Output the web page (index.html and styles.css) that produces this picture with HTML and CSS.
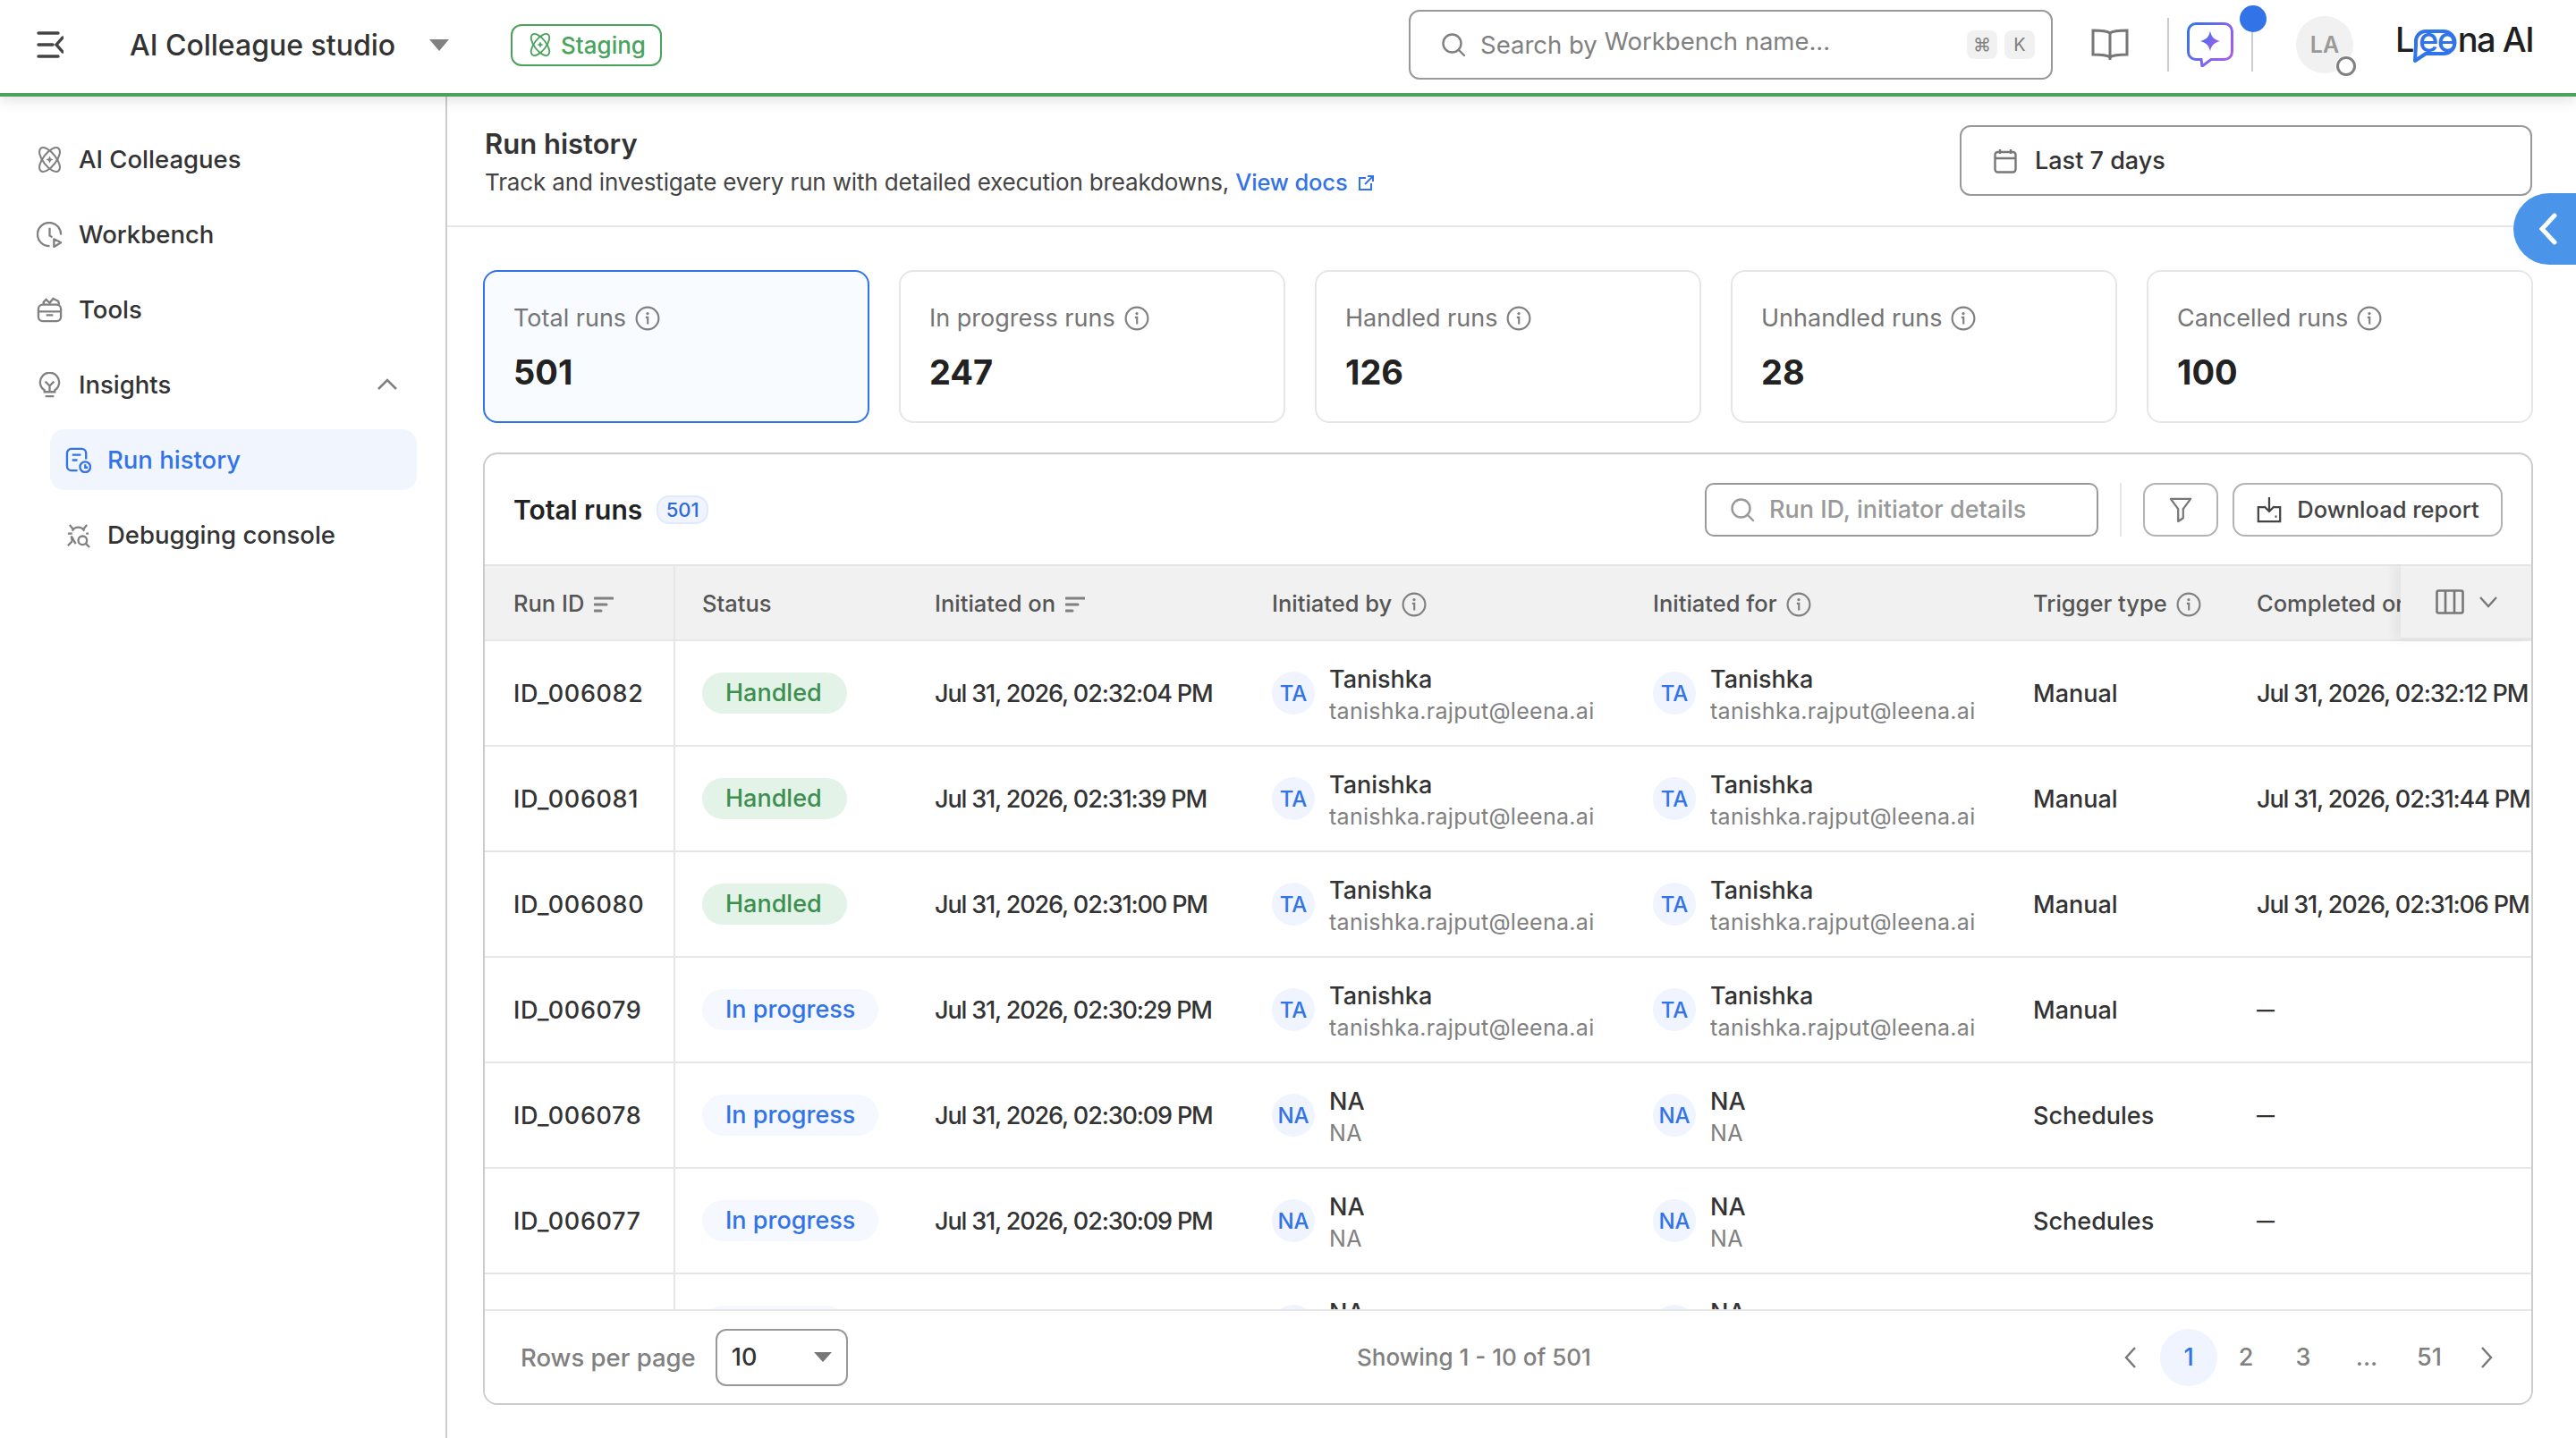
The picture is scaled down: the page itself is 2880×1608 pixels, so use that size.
FILE: index.html
```html
<!DOCTYPE html>
<html lang="en">
<head>
  <meta charset="UTF-8">
  <title>Run history</title>
  <link rel="stylesheet" href="styles.css">
</head>
<body>
  <svg class="sprites" width="0" height="0">
    <defs>
      <linearGradient id="ai-grad" x1="0" y1="0" x2="1" y2="0.6">
        <stop offset="0" stop-color="#2f74e8"/>
        <stop offset="1" stop-color="#a45cf0"/>
      </linearGradient>
      <symbol id="i-atom" viewBox="0 0 28 28">
        <g fill="none" stroke="currentColor" stroke-width="2">
          <ellipse cx="14" cy="14" rx="7" ry="15.5" transform="rotate(-38 14 14)"/>
          <ellipse cx="14" cy="14" rx="7" ry="15.5" transform="rotate(38 14 14)"/>
        </g>
        <path d="M14 10l1.2 2.8L18 14l-2.8 1.2L14 18l-1.2-2.8L10 14l2.8-1.2z" fill="currentColor"/>
      </symbol>
      <symbol id="i-info" viewBox="0 0 26 26">
        <circle cx="13" cy="13" r="11.5" fill="none" stroke="currentColor" stroke-width="2"/>
        <circle cx="13" cy="8" r="1.5" fill="currentColor"/>
        <path d="M11 12h2.2v7" fill="none" stroke="currentColor" stroke-width="2"/>
      </symbol>
      <symbol id="i-sort" viewBox="0 0 22 20">
        <path d="M1 3h20M1 10h13M1 17h7" fill="none" stroke="currentColor" stroke-width="3" stroke-linecap="round"/>
      </symbol>
      <symbol id="i-search" viewBox="0 0 28 28">
        <circle cx="12.5" cy="12.5" r="10" fill="none" stroke="currentColor" stroke-width="2.4"/>
        <path d="M20 20l6 6" fill="none" stroke="currentColor" stroke-width="2.4" stroke-linecap="round"/>
      </symbol>
    </defs>
  </svg>

  <header class="topbar">
    <svg class="menu-icon" viewBox="0 0 30 30" fill="none" stroke="#444" stroke-width="3.4" stroke-linecap="round">
      <path d="M2 2h22M2 15h16M2 28h22M29 7l-7 8 7 8"/>
    </svg>
    <span class="studio">AI Colleague studio</span>
    <span class="caret"></span>
    <span class="env">
      <svg class="env-icon"><use href="#i-atom"/></svg>
      Staging
    </span>

    <div class="global-search">
      <svg class="search-icon"><use href="#i-search"/></svg>
      <span>Search by</span>
      <span class="search-word">Workbench name...</span>
      <span class="keys"><kbd>⌘</kbd><kbd>K</kbd></span>
    </div>

    <svg class="book-icon" viewBox="0 0 42 36" fill="none" stroke="#777" stroke-width="3">
      <path d="M21 5C17 2 8 2 2 2v27c6 0 15 0 19 3 4-3 13-3 19-3V2c-6 0-15 0-19 3zM21 5v30"/>
    </svg>

    <div class="assistant">
      <svg class="ai-icon" viewBox="0 0 52 50" fill="none">
        <path d="M10 1.5h32a8.5 8.5 0 0 1 8.5 8.5v23a8.5 8.5 0 0 1-8.5 8.5H27l-10 7.5-1-7.5h-6A8.5 8.5 0 0 1 1.5 33V10A8.5 8.5 0 0 1 10 1.5z" stroke="url(#ai-grad)" stroke-width="3"/>
        <path d="M26 9.5c1.5 7 4 9.5 11 11.5-7 2-9.5 4.5-11 11.5-1.5-7-4-9.5-11-11.5 7-2 9.5-4.5 11-11.5z" fill="url(#ai-grad)"/>
      </svg>
      <span class="dot"></span>
    </div>

    <div class="avatar">
      LA
      <span class="status"></span>
    </div>

    <div class="logo">
      <svg class="logo-bubble" viewBox="0 0 50 38" fill="none">
        <path d="M14 2h21a12.5 12.5 0 0 1 0 25H15L3 35l1-17V13A11 11 0 0 1 14 2z" stroke="#2f74e8" stroke-width="4" stroke-linejoin="round"/>
      </svg>
      <span>L</span><span class="logo-ee">ee</span><span>na AI</span>
    </div>
  </header>

  <div class="shell">
    <nav class="sidebar">
      <a class="nav-item">
        <svg class="nav-icon"><use href="#i-atom"/></svg>
        AI Colleagues
      </a>
      <a class="nav-item">
        <svg class="nav-icon" viewBox="0 0 30 30" fill="none" stroke="currentColor" stroke-width="2.4">
          <path d="M15 28A13.5 13.5 0 1 1 28 15M15 7v9l3 2"/>
          <path d="M20 20l8 4-8 5z" stroke-linejoin="round"/>
        </svg>
        Workbench
      </a>
      <a class="nav-item">
        <svg class="nav-icon" viewBox="0 0 30 30" fill="none" stroke="currentColor" stroke-width="2.4">
          <rect x="2" y="9" width="26" height="19" rx="5"/>
          <path d="M2 17h26M11 21h8M8 9V6l3-3 4 4 4-5 6 3 1 4"/>
        </svg>
        Tools
      </a>
      <a class="nav-item">
        <svg class="nav-icon" viewBox="0 0 30 30" fill="none" stroke="currentColor" stroke-width="2.4">
          <path d="M9 21a11 11 0 1 1 12 0v2H9zM10 28h10M10 11l5 5 5-5M15 16v6"/>
        </svg>
        Insights
        <svg class="nav-chevron" viewBox="0 0 24 14" fill="none" stroke="currentColor" stroke-width="2.6">
          <path d="M2 12L12 2l10 10"/>
        </svg>
      </a>
      <a class="nav-item sub active">
        <svg class="nav-icon" viewBox="0 0 30 30" fill="none" stroke="currentColor" stroke-width="2.4">
          <path d="M14 27H7a5 5 0 0 1-5-5V7a5 5 0 0 1 5-5h12a5 5 0 0 1 5 5v7M8 9h10M8 15h6"/>
          <circle cx="23" cy="23" r="6"/>
          <path d="M23 20v3.5h3"/>
        </svg>
        Run history
      </a>
      <a class="nav-item sub">
        <svg class="nav-icon" viewBox="0 0 30 30" fill="none" stroke="currentColor" stroke-width="2.4">
          <path d="M8 10a8 8 0 0 1 14 0M5 3l4 5M25 3l-4 5M3 13h5M27 13h-3M3 27l5-5M8 22l-1-6 5 9"/>
          <circle cx="20" cy="21" r="5"/>
          <path d="M24 25l4 4"/>
        </svg>
        Debugging console
      </a>
    </nav>

    <main class="content">
      <section class="page-head">
        <div>
          <h1>Run history</h1>
          <p>
            Track and investigate every run with detailed execution breakdowns,
            <a class="docs">View docs<svg class="ext-icon" viewBox="0 0 20 20" fill="none" stroke="currentColor" stroke-width="2"><path d="M10 4H3v13h13v-7M9 11l9-9M12 2h6v6"/></svg></a>
          </p>
        </div>
        <div class="date-filter">
          <svg class="cal-icon" viewBox="0 0 26 28" fill="none" stroke="#777" stroke-width="2.4">
            <rect x="1.5" y="4" width="23" height="22.5" rx="3"/>
            <path d="M1.5 11h23M7 1v5M19 1v5"/>
          </svg>
          Last 7 days
        </div>
      </section>

      <button class="collapse-tab">
        <svg viewBox="0 0 22 36" fill="none" stroke="#fff" stroke-width="5" stroke-linecap="round">
          <path d="M18 3L4 18l14 15"/>
        </svg>
      </button>

      <section class="body-wrap">
        <div class="cards">
          <div class="card selected">
            <div class="card-label">Total runs <svg class="info"><use href="#i-info"/></svg></div>
            <div class="card-value">501</div>
          </div>
          <div class="card">
            <div class="card-label">In progress runs <svg class="info"><use href="#i-info"/></svg></div>
            <div class="card-value">247</div>
          </div>
          <div class="card">
            <div class="card-label">Handled runs <svg class="info"><use href="#i-info"/></svg></div>
            <div class="card-value">126</div>
          </div>
          <div class="card">
            <div class="card-label">Unhandled runs <svg class="info"><use href="#i-info"/></svg></div>
            <div class="card-value">28</div>
          </div>
          <div class="card">
            <div class="card-label">Cancelled runs <svg class="info"><use href="#i-info"/></svg></div>
            <div class="card-value">100</div>
          </div>
        </div>

        <div class="panel">
          <div class="panel-head">
            <h2>Total runs</h2>
            <span class="count">501</span>
            <div class="table-search">
              <svg class="search-icon"><use href="#i-search"/></svg>
              Run ID, initiator details
            </div>
            <span class="tool-sep"></span>
            <button class="tool-btn filter">
              <svg viewBox="0 0 28 32" fill="none" stroke="#777" stroke-width="2.4" stroke-linejoin="round">
                <path d="M2 3h24l-9 12v11l-6 4V15z"/>
              </svg>
            </button>
            <button class="tool-btn download">
              <svg viewBox="0 0 30 32" fill="none" stroke="#444" stroke-width="2.4">
                <path d="M15 1v17M9 12l6 6 6-6M9 13H2v17h26V13h-7M22 24h2"/>
              </svg>
              Download report
            </button>
          </div>

          <div class="table-wrap">
            <table class="runs">
              <colgroup>
                <col class="c-id"><col class="c-status"><col class="c-on"><col class="c-by"><col class="c-for"><col class="c-trigger"><col class="c-done">
              </colgroup>
              <thead>
                <tr>
                  <th class="id-cell">Run ID <svg class="sort"><use href="#i-sort"/></svg></th>
                  <th>Status</th>
                  <th>Initiated on <svg class="sort"><use href="#i-sort"/></svg></th>
                  <th>Initiated by <svg class="info"><use href="#i-info"/></svg></th>
                  <th>Initiated for <svg class="info"><use href="#i-info"/></svg></th>
                  <th>Trigger type <svg class="info"><use href="#i-info"/></svg></th>
                  <th>Completed on</th>
                </tr>
              </thead>
              <tbody>
                <tr>
                  <td class="id-cell">ID_006082</td>
                  <td><span class="pill handled">Handled</span></td>
                  <td>Jul 31, 2026, 02:32:04 PM</td>
                  <td><div class="person"><span class="initials">TA</span><div><div class="p-name">Tanishka</div><div class="p-mail">tanishka.rajput@leena.ai</div></div></div></td>
                  <td><div class="person"><span class="initials">TA</span><div><div class="p-name">Tanishka</div><div class="p-mail">tanishka.rajput@leena.ai</div></div></div></td>
                  <td>Manual</td>
                  <td>Jul 31, 2026, 02:32:12 PM</td>
                </tr>
                <tr>
                  <td class="id-cell">ID_006081</td>
                  <td><span class="pill handled">Handled</span></td>
                  <td>Jul 31, 2026, 02:31:39 PM</td>
                  <td><div class="person"><span class="initials">TA</span><div><div class="p-name">Tanishka</div><div class="p-mail">tanishka.rajput@leena.ai</div></div></div></td>
                  <td><div class="person"><span class="initials">TA</span><div><div class="p-name">Tanishka</div><div class="p-mail">tanishka.rajput@leena.ai</div></div></div></td>
                  <td>Manual</td>
                  <td>Jul 31, 2026, 02:31:44 PM</td>
                </tr>
                <tr>
                  <td class="id-cell">ID_006080</td>
                  <td><span class="pill handled">Handled</span></td>
                  <td>Jul 31, 2026, 02:31:00 PM</td>
                  <td><div class="person"><span class="initials">TA</span><div><div class="p-name">Tanishka</div><div class="p-mail">tanishka.rajput@leena.ai</div></div></div></td>
                  <td><div class="person"><span class="initials">TA</span><div><div class="p-name">Tanishka</div><div class="p-mail">tanishka.rajput@leena.ai</div></div></div></td>
                  <td>Manual</td>
                  <td>Jul 31, 2026, 02:31:06 PM</td>
                </tr>
                <tr>
                  <td class="id-cell">ID_006079</td>
                  <td><span class="pill progress">In progress</span></td>
                  <td>Jul 31, 2026, 02:30:29 PM</td>
                  <td><div class="person"><span class="initials">TA</span><div><div class="p-name">Tanishka</div><div class="p-mail">tanishka.rajput@leena.ai</div></div></div></td>
                  <td><div class="person"><span class="initials">TA</span><div><div class="p-name">Tanishka</div><div class="p-mail">tanishka.rajput@leena.ai</div></div></div></td>
                  <td>Manual</td>
                  <td class="dash">—</td>
                </tr>
                <tr>
                  <td class="id-cell">ID_006078</td>
                  <td><span class="pill progress">In progress</span></td>
                  <td>Jul 31, 2026, 02:30:09 PM</td>
                  <td><div class="person"><span class="initials">NA</span><div><div class="p-name">NA</div><div class="p-mail">NA</div></div></div></td>
                  <td><div class="person"><span class="initials">NA</span><div><div class="p-name">NA</div><div class="p-mail">NA</div></div></div></td>
                  <td>Schedules</td>
                  <td class="dash">—</td>
                </tr>
                <tr>
                  <td class="id-cell">ID_006077</td>
                  <td><span class="pill progress">In progress</span></td>
                  <td>Jul 31, 2026, 02:30:09 PM</td>
                  <td><div class="person"><span class="initials">NA</span><div><div class="p-name">NA</div><div class="p-mail">NA</div></div></div></td>
                  <td><div class="person"><span class="initials">NA</span><div><div class="p-name">NA</div><div class="p-mail">NA</div></div></div></td>
                  <td>Schedules</td>
                  <td class="dash">—</td>
                </tr>
                <tr>
                  <td class="id-cell"></td>
                  <td><span class="pill progress"></span></td>
                  <td></td>
                  <td><div class="person"><span class="initials">NA</span><div><div class="p-name">NA</div><div class="p-mail">NA</div></div></div></td>
                  <td><div class="person"><span class="initials">NA</span><div><div class="p-name">NA</div><div class="p-mail">NA</div></div></div></td>
                  <td></td>
                  <td></td>
                </tr>
              </tbody>
            </table>
            <div class="col-picker">
              <svg class="col-icon" viewBox="0 0 32 28" fill="none" stroke="#777" stroke-width="2.6">
                <rect x="1.5" y="1.5" width="29" height="25" rx="2"/>
                <path d="M11 1.5v25M21 1.5v25"/>
              </svg>
              <svg class="col-chevron" viewBox="0 0 22 14" fill="none" stroke="#777" stroke-width="2.4">
                <path d="M2 2l9 10 9-10"/>
              </svg>
            </div>
          </div>

          <div class="panel-foot">
            <span class="rows-label">Rows per page</span>
            <div class="rows-select">10<span class="select-caret"></span></div>
            <span class="showing">Showing 1 - 10 of 501</span>
            <div class="pager">
              <svg class="page-arrow" viewBox="0 0 14 26" fill="none" stroke="#777" stroke-width="2.4"><path d="M12 2L2 13l10 11"/></svg>
              <span class="page current">1</span>
              <span class="page">2</span>
              <span class="page">3</span>
              <span class="page ellipsis">...</span>
              <span class="page last">51</span>
              <svg class="page-arrow" viewBox="0 0 14 26" fill="none" stroke="#777" stroke-width="2.4"><path d="M2 2l10 11L2 24"/></svg>
            </div>
          </div>
        </div>
      </section>
    </main>
  </div>
</body>
</html>
```
FILE: styles.css
```css
* {
  box-sizing: border-box;
}
body {
  margin: 0;
  height: 1608px;
  overflow: hidden;
  background: #fff;
  color: #333;
  font-family: Inter, "Noto Sans", sans-serif;
  font-size: 27px;
  display: flex;
  flex-direction: column;
}
.sprites {
  position: absolute;
}

/* top bar */
.topbar {
  height: 108px;
  flex: none;
  display: flex;
  align-items: center;
  padding: 0 48px 4px 41px;
  border-bottom: 4px solid #4aa35c;
  box-shadow: 0 4px 14px rgba(0,0,0,0.12);
  position: relative;
  z-index: 2;
  background: #fff;
}
.menu-icon {
  width: 30px;
  height: 30px;
}
.studio {
  margin-left: 74px;
  width: 335px;
  font-size: 32px;
  font-weight: 500;
}
.caret {
  width: 0;
  height: 0;
  border-left: 11px solid transparent;
  border-right: 11px solid transparent;
  border-top: 13px solid #808080;
}
.env {
  margin-left: 69px;
  width: 169px;
  height: 47px;
  border: 2px solid #4aa35c;
  border-radius: 12px;
  color: #4aa35c;
  font-size: 26px;
  font-weight: 500;
  display: flex;
  align-items: center;
  gap: 10px;
  padding-left: 18px;
}
.env-icon {
  width: 26px;
  height: 26px;
}
.global-search {
  margin-left: 835px;
  width: 720px;
  height: 78px;
  border: 2px solid #999;
  border-radius: 12px;
  display: flex;
  align-items: center;
  padding: 0 18px 0 34px;
  color: #808080;
  font-size: 27.5px;
  gap: 8px;
}
.global-search .search-icon {
  margin-right: 8px;
}
.search-icon {
  width: 28px;
  height: 28px;
  flex: none;
}
.search-word {
  transform: translateY(-4px);
}
.keys {
  margin-left: auto;
  display: flex;
  gap: 8px;
}
kbd {
  width: 34px;
  height: 32px;
  background: #f1f1f1;
  border-radius: 8px;
  font-family: inherit;
  font-size: 20px;
  display: flex;
  align-items: center;
  justify-content: center;
  color: #808080;
}
.book-icon {
  margin-left: 43px;
  width: 42px;
  height: 36px;
}
.assistant {
  margin-left: 43px;
  width: 96px;
  height: 60px;
  border-left: 2px solid #ccc;
  border-right: 2px solid #ccc;
  position: relative;
  display: flex;
  align-items: center;
  padding-left: 20px;
}
.ai-icon {
  width: 52px;
  height: 50px;
}
.dot {
  position: absolute;
  right: -17px;
  top: -14px;
  width: 30px;
  height: 30px;
  border-radius: 50%;
  background: #3273e8;
}
.avatar {
  margin-left: 48px;
  width: 64px;
  height: 64px;
  border-radius: 50%;
  background: #f1f1f1;
  color: #999;
  font-size: 25px;
  font-weight: 600;
  display: flex;
  align-items: center;
  justify-content: center;
  position: relative;
}
.status {
  position: absolute;
  right: -4px;
  bottom: -4px;
  width: 24px;
  height: 24px;
  border-radius: 50%;
  background: #fff;
  display: flex;
  align-items: center;
  justify-content: center;
}
.status::after {
  content: "";
  width: 16px;
  height: 16px;
  border-radius: 50%;
  border: 3px solid #808080;
}
.logo {
  margin-left: auto;
  position: relative;
  color: #1f1f1f;
  font-size: 38px;
  letter-spacing: -1.5px;
  font-weight: 500;
  line-height: 1;
  display: flex;
  margin-top: -12px;
}
.logo-ee {
  color: #2f74e8;
  margin: 0 2px 0 6px;
}
.logo-bubble {
  position: absolute;
  left: 19px;
  top: 8px;
  width: 50px;
  height: 38px;
}

/* shell */
.shell {
  flex: 1;
  display: flex;
  min-height: 0;
}
.sidebar {
  width: 500px;
  flex: none;
  border-right: 2px solid #ccc;
  padding: 36px 32px 0 41px;
  display: flex;
  flex-direction: column;
  gap: 16px;
}
.nav-item {
  height: 68px;
  display: flex;
  align-items: center;
  gap: 18px;
  font-size: 27.5px;
  font-weight: 500;
  color: #333;
}
.nav-icon {
  width: 29px;
  height: 29px;
  color: #808080;
  flex: none;
}
.nav-chevron {
  margin-left: auto;
  margin-right: 21px;
  width: 24px;
  height: 14px;
  color: #808080;
}
.nav-item.sub {
  margin-left: 15px;
  padding-left: 17px;
  border-radius: 16px;
}
.nav-item.active {
  background: #f0f5fe;
  color: #3273e8;
}
.nav-item.active .nav-icon {
  color: #3273e8;
}

/* main */
.content {
  flex: 1;
  min-width: 0;
  position: relative;
  display: flex;
  flex-direction: column;
}
.page-head {
  height: 146px;
  flex: none;
  border-bottom: 2px solid #e6e6e6;
  display: flex;
  justify-content: space-between;
  padding: 32px 49px 0 42px;
}
h1 {
  margin: 0;
  font-size: 31px;
  font-weight: 600;
  line-height: 42px;
}
.page-head p {
  margin: 3px 0 0;
  font-size: 26px;
  letter-spacing: -0.15px;
  line-height: 38px;
  color: #444;
}
.docs {
  color: #3273e8;
  font-weight: 500;
  font-size: 25.5px;
}
.ext-icon {
  width: 20px;
  height: 20px;
  margin-left: 10px;
  vertical-align: -2px;
}
.date-filter {
  width: 640px;
  height: 79px;
  border: 2px solid #999;
  border-radius: 12px;
  display: flex;
  align-items: center;
  padding-left: 36px;
  gap: 20px;
  font-weight: 500;
}
.cal-icon {
  width: 26px;
  height: 28px;
}
.collapse-tab {
  position: absolute;
  right: 0;
  top: 108px;
  width: 70px;
  height: 80px;
  border: none;
  border-radius: 40px 0 0 40px;
  background: #4a94ea;
  padding: 0 0 0 28px;
}
.collapse-tab svg {
  width: 22px;
  height: 36px;
  display: block;
}
.body-wrap {
  flex: 1;
  min-height: 0;
  padding: 48px 48px 37px 40px;
  display: flex;
  flex-direction: column;
  gap: 33px;
}
.cards {
  display: grid;
  grid-template-columns: repeat(5, 1fr);
  gap: 33px;
  flex: none;
}
.card {
  height: 171px;
  border: 2px solid #e6e6e6;
  border-radius: 16px;
  padding: 32px 32px 0;
}
.card.selected {
  border-color: #3273e8;
  background: #f8fbff;
}
.card-label {
  display: flex;
  align-items: center;
  gap: 10px;
  color: #757575;
  line-height: 40px;
}
.info {
  width: 28px;
  height: 28px;
  color: #808080;
  flex: none;
}
.card-value {
  margin-top: 15px;
  font-size: 38px;
  font-weight: 700;
  line-height: 50px;
  color: #222;
}

/* panel */
.panel {
  flex: 1;
  min-height: 0;
  border: 2px solid #ccc;
  border-radius: 16px;
  overflow: hidden;
  display: flex;
  flex-direction: column;
}
.panel-head {
  height: 123px;
  flex: none;
  display: flex;
  align-items: center;
  padding: 0 32px;
}
h2 {
  margin: 0;
  font-size: 30px;
  font-weight: 600;
  color: #222;
}
.count {
  margin-left: 16px;
  width: 58px;
  height: 32px;
  border: 2px solid #e0eafb;
  background: #eff4fe;
  border-radius: 14px;
  color: #2f6bd8;
  font-size: 22px;
  font-weight: 500;
  display: flex;
  align-items: center;
  justify-content: center;
}
.table-search {
  margin-left: auto;
  width: 440px;
  height: 60px;
  border: 2px solid #999;
  border-radius: 10px;
  display: flex;
  align-items: center;
  gap: 16px;
  padding-left: 26px;
  color: #999;
  font-weight: 500;
}
.tool-sep {
  width: 2px;
  height: 60px;
  background: #e6e6e6;
  margin: 0 24px;
}
.tool-btn {
  height: 60px;
  border: 2px solid #b3b3b3;
  border-radius: 14px;
  background: #fff;
  display: flex;
  align-items: center;
  justify-content: center;
  font-family: inherit;
  font-size: 25.5px;
  font-weight: 500;
  color: #444;
}
.tool-btn.filter {
  width: 84px;
}
.tool-btn.filter svg {
  width: 26px;
  height: 30px;
}
.tool-btn.download {
  margin-left: 16px;
  width: 302px;
  gap: 16px;
}
.tool-btn.download svg {
  width: 30px;
  height: 30px;
}

/* table */
.table-wrap {
  flex: 1;
  min-height: 0;
  overflow: hidden;
  position: relative;
}
.runs {
  width: 2288px;
  table-layout: fixed;
  border-collapse: collapse;
  white-space: nowrap;
}
.c-id { width: 212px; }
.c-status { width: 261px; }
.c-on { width: 377px; }
.c-by { width: 426px; }
.c-for { width: 425px; }
.c-trigger { width: 250px; }
.c-done { width: 337px; }
th {
  height: 84px;
  background: #f1f1f1;
  border-top: 2px solid #e6e6e6;
  border-bottom: 2px solid #e6e6e6;
  text-align: left;
  font-size: 25.5px;
  font-weight: 500;
  color: #555;
  padding: 0 0 0 30px;
  overflow: hidden;
}
th svg {
  vertical-align: -6px;
  margin-left: 4px;
}
th .sort {
  width: 22px;
  height: 20px;
  color: #808080;
  vertical-align: -2px;
}
td {
  height: 118px;
  border-bottom: 2px solid #e6e6e6;
  padding: 0 0 0 30px;
  font-size: 27px;
  font-weight: 500;
  color: #333;
  overflow: hidden;
}
td:nth-child(3),
td:nth-child(7) {
  letter-spacing: -1.15px;
}
.runs .id-cell {
  padding-left: 32px;
  border-right: 2px solid #e6e6e6;
}
td.id-cell {
  letter-spacing: 0.6px;
}
.pill {
  display: inline-block;
  min-width: 162px;
  height: 46px;
  line-height: 46px;
  border-radius: 23px;
  padding: 0 26px;
}
.pill.handled {
  background: #e3f3e7;
  color: #3c8f4f;
}
.pill.progress {
  background: #f5f9ff;
  color: #3273e8;
  vertical-align: middle;
}
.person {
  display: flex;
  align-items: center;
  gap: 16px;
}
.initials {
  width: 48px;
  height: 48px;
  flex: none;
  border-radius: 50%;
  background: #eff4fe;
  color: #3273e8;
  font-size: 24px;
  display: flex;
  align-items: center;
  justify-content: center;
}
.p-name {
  margin-top: 4px;
  line-height: 36px;
  color: #333;
}
.p-mail {
  line-height: 34px;
  font-size: 25px;
  letter-spacing: 0.3px;
  font-weight: 400;
  color: #808080;
}
td.dash {
  color: #333;
  font-size: 20px;
  font-weight: 700;
}
.col-picker {
  position: absolute;
  right: 0;
  top: 0;
  width: 146px;
  height: 84px;
  background: #f1f1f1;
  border-top: 2px solid #e6e6e6;
  border-bottom: 2px solid #e6e6e6;
  box-shadow: -8px 0 10px rgba(0,0,0,0.05);
  display: flex;
  align-items: center;
  gap: 16px;
  padding-left: 39px;
}
.col-icon {
  width: 32px;
  height: 28px;
}
.col-chevron {
  width: 22px;
  height: 14px;
}

/* footer */
.panel-foot {
  height: 105px;
  flex: none;
  border-top: 2px solid #e6e6e6;
  display: flex;
  align-items: center;
  padding: 0 17px 0 40px;
  background: #fff;
  position: relative;
  color: #808080;
}
.rows-label {
  font-weight: 500;
  font-size: 27.5px;
}
.rows-select {
  margin-left: 22px;
  width: 148px;
  height: 64px;
  border: 2px solid #999;
  border-radius: 12px;
  padding: 0 16px 0 16px;
  color: #333;
  font-weight: 500;
  display: flex;
  align-items: center;
  justify-content: space-between;
}
.select-caret {
  width: 0;
  height: 0;
  border-left: 10px solid transparent;
  border-right: 10px solid transparent;
  border-top: 11px solid #777;
}
.showing {
  position: absolute;
  left: 975px;
  font-weight: 500;
  font-size: 26px;
}
.pager {
  margin-left: auto;
  display: flex;
  align-items: center;
  font-weight: 500;
}
.page {
  min-width: 64px;
  height: 64px;
  border-radius: 50%;
  display: flex;
  align-items: center;
  justify-content: center;
}
.page.current {
  background: #eff4fe;
  color: #3273e8;
}
.page.ellipsis {
  min-width: 78px;
}
.page.last {
  min-width: 62px;
}
.page-arrow {
  width: 14px;
  height: 26px;
  margin: 0 26px;
}
```
